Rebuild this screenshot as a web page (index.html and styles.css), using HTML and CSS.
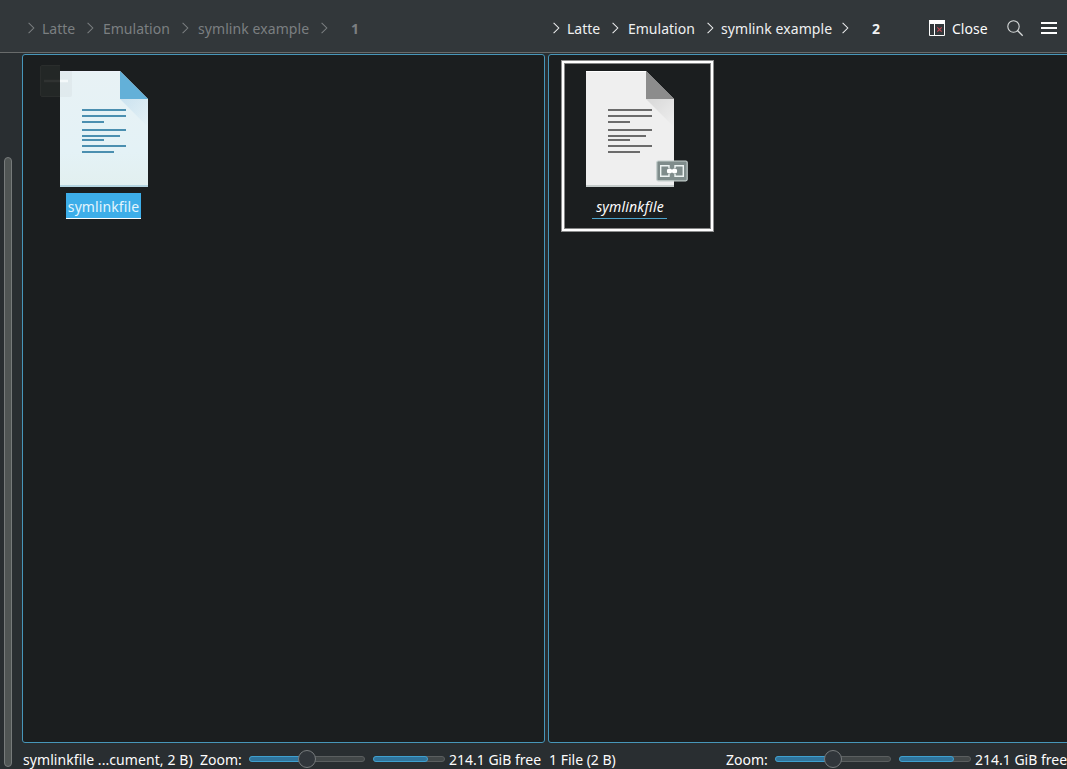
FILE: index.html
```html
<!DOCTYPE html>
<html lang="en">
<head>
<meta charset="utf-8">
<title>symlink example</title>
<link rel="stylesheet" href="styles.css">
</head>
<body>
<svg class="defs" width="0" height="0">
  <symbol id="chev" viewBox="0 0 8 12"><path d="M.6 .8 5.800 6 .6 11.200" fill="none" stroke="currentColor" stroke-width="1.050"/></symbol>
  <symbol id="lines" viewBox="0 0 88 116">
    <path d="M22 39h44M22 45h44M22 51h22M22 59h44M22 65h38M22 69h22M22 75h44M22 81h32" fill="none" stroke="currentColor" stroke-width="2"/>
  </symbol>
  <linearGradient id="shade" x1="0" y1="0" x2="1" y2="1"><stop offset="0" stop-color="#000" stop-opacity=".1"/><stop offset="1" stop-color="#000" stop-opacity="0"/></linearGradient>
  <linearGradient id="blueShade" x1="0" y1="0" x2="1" y2="1"><stop offset="0" stop-color="#79b4df" stop-opacity=".25"/><stop offset="1" stop-color="#79b4df" stop-opacity="0"/></linearGradient>
  <linearGradient id="bluePaper" x1="0" y1="0" x2="0" y2="1"><stop offset="0" stop-color="#e8f2f5"/><stop offset=".7" stop-color="#e4f2f6"/><stop offset="1" stop-color="#e2efef"/></linearGradient>
</svg>
<div class="window">
  <header class="toolbar">
    <nav class="crumbs crumbs-left">
      <svg class="chev"><use href="#chev"/></svg><span>Latte</span>
      <svg class="chev"><use href="#chev"/></svg><span>Emulation</span>
      <svg class="chev"><use href="#chev"/></svg><span class="wide">symlink example</span>
      <svg class="chev"><use href="#chev"/></svg><b>1</b>
    </nav>
    <nav class="crumbs crumbs-right">
      <svg class="chev"><use href="#chev"/></svg><span>Latte</span>
      <svg class="chev"><use href="#chev"/></svg><span>Emulation</span>
      <svg class="chev"><use href="#chev"/></svg><span class="wide">symlink example</span>
      <svg class="chev"><use href="#chev"/></svg><b>2</b>
    </nav>
    <div class="actions">
      <svg width="16" height="16" viewBox="0 0 16 16"><path d="M0 0h16v4H0z" fill="#fff"/><path d="M.5 4v11.500h15V4M5.500 4v11.500" fill="none" stroke="#fcfcfc"/><path d="M8.300 7.300l4.400 4.400M12.700 7.300l-4.400 4.400" stroke="#c0444f" stroke-width="1.100"/></svg>
      <span class="close">Close</span>
      <svg class="search" width="17" height="17" viewBox="0 0 17 17"><circle cx="6.500" cy="6.500" r="5.700" fill="none" stroke="#d8dbdb" stroke-width="1.100"/><path d="M10.500 10.500l5.200 5.200" stroke="#d8dbdb" stroke-width="1.300"/></svg>
      <svg class="menu" width="16" height="12" viewBox="0 0 16 12"><path d="M0 1h16M0 6h16M0 11h16" stroke="#fff" stroke-width="2"/></svg>
    </div>
  </header>
  <main class="main">
    <aside class="side"><div class="scrollbar"></div></aside>
    <section class="pane">
      <div class="view">
        <div class="file selected">
          <svg class="doc" width="88" height="116" viewBox="0 0 88 116">
            <path d="M0 0h60l28 28v88H0z" fill="url(#bluePaper)"/><path d="M0 0h60v1H0z" fill="#edf2fa"/>
            <path d="M60 28h28v28z" fill="url(#blueShade)"/><path d="M60 0l28 28H60z" fill="#63b0d8"/><path d="M0 114h88v2H0z" fill="#b4d4e0"/>
            <g color="#4b8fb0"><use href="#lines" width="88" height="116"/></g>
          </svg>
          <svg class="deselect" width="32" height="32" viewBox="0 0 32 32"><path d="M20 .5H2Q.5 .5 .5 2v28Q.5 31.500 2 31.500h18" fill="#232726" stroke="#2a2d2c"/><path d="M20 6h12v24q0 2-2 2H20z" fill="#5c6460" fill-opacity=".05"/><path d="M4 16h16" stroke="#303332" stroke-width="2.500"/><path d="M20 16h8" stroke="#f4f9fa" stroke-width="2.500"/></svg>
          <span class="name">symlinkfile</span>
        </div>
      </div>
      <footer class="status">
        <span class="info wide">symlinkfile ...cument, 2 B)</span>
        <span class="zoom">Zoom:</span>
        <div class="slider"><i></i><b></b></div>
        <div class="space"><i></i></div>
        <span class="free">214.1 GiB free</span>
      </footer>
    </section>
    <section class="pane pane-right">
      <div class="view">
        <div class="file linked">
          <svg class="doc" width="88" height="116" viewBox="0 0 88 116">
            <path d="M0 0h60l28 28v88H0z" fill="#efefef"/><path d="M0 0h60v1H0z" fill="#fff"/>
            <path d="M60 28h28v28z" fill="url(#shade)"/><path d="M60 0l28 28H60z" fill="#8c8c8c"/><path d="M0 114h88v2H0z" fill="#c5cccb"/>
            <g color="#6b6b6b"><use href="#lines" width="88" height="116"/></g>
          </svg>
          <svg class="emblem" width="32" height="22" viewBox="0 0 32 22"><rect x=".8" y="1" width="30.400" height="19.800" rx="1.500" fill="#7f8c8b" stroke="#c3cecc" stroke-width="1.200"/><path d="M13 8V5.800H4.700v10.400H13V14M19 8V5.800h8.300v10.400H19V14" fill="none" stroke="#eef4f3" stroke-width="1.400"/><path d="M11.500 11h9" stroke="#fff" stroke-width="3"/><circle cx="13.400" cy="11" r="2.500" fill="#fff"/><circle cx="18.600" cy="11" r="2.500" fill="#fff"/></svg>
          <span class="name">symlinkfile</span>
        </div>
      </div>
      <footer class="status">
        <span class="info">1 File (2 B)</span>
        <span class="zoom">Zoom:</span>
        <div class="slider"><i></i><b></b></div>
        <div class="space"><i></i></div>
        <span class="free">214.1 GiB free</span>
      </footer>
    </section>
  </main>
</div>
</body>
</html>
```
FILE: styles.css
```css
* { box-sizing: border-box; }
body { margin: 0; overflow: hidden; background: #292e31; color: #fcfcfc; font: 14px/18px "Noto Sans", sans-serif; }
svg { display: block; flex: none; }
.defs { position: absolute; }
.window { display: flex; flex-direction: column; width: 1067px; height: 769px; overflow: hidden; }
.toolbar { display: flex; height: 53px; padding-top: 4px; background: #32373a; border-bottom: 1px solid #686b6b; }
.crumbs { display: grid; align-items: center; white-space: nowrap; }
.crumbs span, .crumbs b, .close { padding-top: 2px; }
.crumbs-left { width: 525px; padding-left: 28px; grid-template-columns: 14px 45px 16px 79px 16px 123px 30px 1fr; color: #7b7f81; }
.crumbs-right { width: 404px; padding-left: 28px; grid-template-columns: 14px 45px 16px 79px 14px 121px 30px 1fr; color: #eff0f1; }
.wide { letter-spacing: .08px; }
.chev { width: 8px; height: 12px; }
.actions { display: flex; flex: 1; align-items: center; }
.close { width: 62px; padding-left: 7px; }
.search { width: 17px; margin-right: 17px; }
.main { display: flex; flex: 1; min-height: 0; }
.side { flex: none; width: 22px; padding: 104px 0 0 4px; }
.scrollbar { width: 8px; height: 610px; border: 1px solid #777b7b; border-radius: 4px; background: #505554; }
.pane { display: flex; flex: none; flex-direction: column; width: 523px; padding-top: 1px; }
.pane-right { width: 526px; margin-left: 3px; }
.view { height: 689px; border: 1px solid #4796b9; border-radius: 3px; background: #1b1e1f; }
.file { position: relative; display: flex; flex-direction: column; align-items: center; width: 153px; height: 172px; margin: 5px 0 0 4px; padding-top: 11px; }
.selected .doc { margin-left: 1px; }
.linked { margin-left: 12px; padding: 10px 15px 0 0; border: 1px solid #8d8e8e; box-shadow: inset 0 0 0 2px #fff, inset 0 0 0 3px #858686; }
.name { width: 75px; height: 26px; margin-top: 6px; padding-top: 5px; text-align: center; letter-spacing: .1px; border-bottom: 1px solid #4da3cb; }
.selected .name { background: #3daee9; border-bottom-color: #fff; color: #e3f5fd; }
.linked .name { font-style: italic; letter-spacing: .18px; margin-right: 1px; padding-left: 1px; }
.deselect { position: absolute; left: 13px; top: 5px; }
.emblem { position: absolute; left: 94px; top: 99px; }
.status { display: grid; align-items: center; height: 26px; padding: 6px 0 0 1px; white-space: nowrap; grid-template-columns: 177px 49px 124px 76px 1fr; }
.status span { padding-top: 2px; }
.slider { position: relative; width: 116px; height: 6px; border: 1px solid #5b5f60; border-radius: 3px; background: #424748; }
.slider i, .space i { display: block; width: 58px; height: 6px; margin: -1px; border: 1px solid #3fa0cf; border-radius: 3px; background: #2f749c; }
.slider b { position: absolute; left: 48px; top: -7px; width: 18px; height: 18px; border: 1px solid #777b7d; border-radius: 50%; background: #31363b; }
.space { width: 72px; height: 6px; border: 1px solid #5b5f60; border-radius: 3px; background: #424748; }
.space i { width: 55px; }
```
